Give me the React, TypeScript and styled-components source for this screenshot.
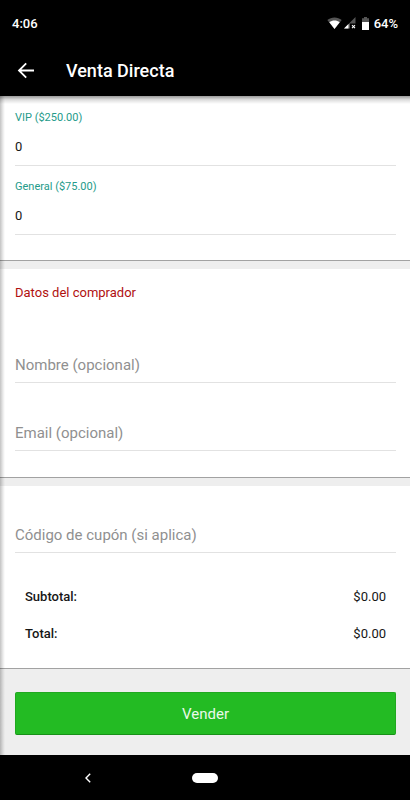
import React from "react";
import styled, { createGlobalStyle } from "styled-components";

const GlobalStyle = createGlobalStyle`
  *, *::before, *::after { box-sizing: border-box; }
  body {
    margin: 0;
    background: #eeeeee;
    color: #161616;
    font-family: Roboto, "Liberation Sans", sans-serif;
  }
`;

const Screen = styled.div`
  display: flex;
  flex-direction: column;
  min-height: 100vh;
`;

const StatusBar = styled.div`
  display: flex;
  align-items: center;
  justify-content: space-between;
  height: 46px;
  padding: 0 12px;
  background: #000;
  color: #fff;
  font-size: 13px;
  font-weight: 500;
`;

const StatusIcons = styled.div`
  display: flex;
  align-items: center;

  svg { display: block; }
`;

const WifiIcon = styled.svg`
  margin-right: 2px;
`;

const SignalIcon = styled.svg`
  margin-right: 6px;
`;

const BatteryIcon = styled.svg`
  margin-right: 5px;
`;

const AppBar = styled.header`
  display: flex;
  align-items: center;
  gap: 30px;
  height: 50px;
  padding: 0 16px;
  background: #000;
  color: #fff;
`;

const IconButton = styled.button`
  display: flex;
  align-items: center;
  justify-content: center;
  width: 20px;
  height: 20px;
  padding: 0;
  border: 0;
  background: none;
  color: inherit;
  cursor: pointer;
`;

const Title = styled.h1`
  margin: 0;
  font-size: 18px;
  font-weight: 500;
  line-height: 24px;
`;

const Content = styled.main`
  position: relative;
  display: flex;
  flex: 1;
  flex-direction: column;
  background: #eeeeee;

  &::before,
  &::after {
    content: "";
    position: absolute;
    top: 0;
    left: 0;
    pointer-events: none;
  }

  &::before {
    right: 0;
    height: 8px;
    background: linear-gradient(rgba(0, 0, 0, 0.4), rgba(0, 0, 0, 0.14) 45%, transparent);
  }

  &::after {
    bottom: 0;
    width: 5px;
    background: linear-gradient(to right, rgba(0, 0, 0, 0.24), rgba(0, 0, 0, 0.08) 60%, transparent);
  }
`;

const Panel = styled.section<{ $top?: number; $bottom: number }>`
  padding: ${(p) => p.$top ?? 0}px 14px ${(p) => p.$bottom}px 15px;
  border-bottom: 1px solid #a2a2a2;
  background: #fff;

  & + & { margin-top: 8px; }
`;

const Fields = styled.div`
  display: flex;
  flex-direction: column;
  gap: 1px;
`;

const Field = styled.div<{ $labelled?: boolean }>`
  display: flex;
  flex-direction: column;
  padding-top: ${(p) => (p.$labelled ? 12 : 30)}px;
`;

const Label = styled.label`
  margin-bottom: 3px;
  color: #259b8a;
  font-size: 11px;
  line-height: 16px;
`;

const TextInput = styled.input<{ $large?: boolean }>`
  width: 100%;
  height: 37px;
  padding: ${(p) => (p.$large ? "2px 0 0" : "0 0 1px")};
  border: 0;
  border-bottom: 1px solid #e2e2e2;
  border-radius: 0;
  outline: 0;
  background: transparent;
  color: #161616;
  font-family: inherit;
  font-size: ${(p) => (p.$large ? 15 : 13)}px;

  &::placeholder { color: #909090; opacity: 1; }
`;

const SectionTitle = styled.h2`
  margin: 0 0 11px;
  color: #b01010;
  font-size: 13px;
  font-weight: 400;
  line-height: 24px;
`;

const Totals = styled.dl`
  display: flex;
  flex-direction: column;
  gap: 17px;
  margin: 34px 10px 0;
`;

const TotalRow = styled.div`
  display: flex;
  justify-content: space-between;
  font-size: 13px;
  line-height: 20px;

  dt { font-weight: 500; }
  dd { margin: 0; }
`;

const Actions = styled.div`
  padding: 23px 14px 20px 15px;
`;

const SellButton = styled.button`
  display: block;
  width: 100%;
  height: 43px;
  padding: 0;
  border: 1px solid #20a820;
  border-bottom-color: #189018;
  border-radius: 2px;
  background: #23bb23;
  color: #e9f9e9;
  font-family: inherit;
  font-size: 15px;
  cursor: pointer;
`;

const NavBar = styled.nav`
  display: grid;
  grid-template-columns: 1fr auto 1fr;
  align-items: center;
  height: 45px;
  background: #000;
  color: #fff;
`;

const NavBack = styled(IconButton)`
  justify-self: center;
  margin-left: -16px;
`;

const HomePill = styled.button`
  width: 26px;
  height: 10px;
  padding: 0;
  border: 0;
  border-radius: 5px;
  background: #fff;
  cursor: pointer;
`;

export default function App() {
  return (
    <Screen>
      <GlobalStyle />
      <StatusBar>
        <span>4:06</span>
        <StatusIcons>
          <WifiIcon width="15" height="12" viewBox="0 0 15 12" aria-hidden="true">
            <path d="M7.5 12 0.3 3C4.4-.5 10.6-.5 14.7 3Z" fill="#555" />
            <path d="M7.5 12 2.3 5.3C5.3 2.8 9.7 2.8 12.7 5.3Z" fill="#fff" />
          </WifiIcon>
          <SignalIcon width="12" height="12" viewBox="0 0 12 12" aria-hidden="true">
            <path d="M0 11.5 11.5 0V6.5H6V11.5Z" fill="#555" />
            <path d="M0 11.5 4.5 7V11.5Z" fill="#fff" />
            <path d="M8 8.2 11 11.2M11 8.2 8 11.2" stroke="#fff" strokeWidth="1.1" />
          </SignalIcon>
          <BatteryIcon width="7" height="13" viewBox="0 0 7 13" aria-hidden="true">
            <path d="M2 0H5V1.3H7V5H0V1.3H2Z" fill="#555" />
            <path d="M0 5H7V13H0Z" fill="#fff" />
          </BatteryIcon>
          <span>64%</span>
        </StatusIcons>
      </StatusBar>
      <AppBar>
        <IconButton type="button" aria-label="Atrás">
          <svg width="20" height="20" viewBox="0 0 20 20" fill="none" stroke="currentColor" strokeWidth="1.8">
            <path d="M18 9.5H3.5M10.2 2.3 3 9.5 10.2 16.7" />
          </svg>
        </IconButton>
        <Title>Venta Directa</Title>
      </AppBar>
      <Content>
        <Panel $top={2} $bottom={25}>
          <Fields>
            <Field $labelled>
              <Label htmlFor="vip">VIP ($250.00)</Label>
              <TextInput id="vip" inputMode="numeric" defaultValue="0" />
            </Field>
            <Field $labelled>
              <Label htmlFor="general">General ($75.00)</Label>
              <TextInput id="general" inputMode="numeric" defaultValue="0" />
            </Field>
          </Fields>
        </Panel>
        <Panel $top={12} $bottom={26}>
          <SectionTitle>Datos del comprador</SectionTitle>
          <Fields>
            <Field>
              <TextInput $large aria-label="Nombre" placeholder="Nombre (opcional)" />
            </Field>
            <Field>
              <TextInput $large type="email" aria-label="Email" placeholder="Email (opcional)" />
            </Field>
          </Fields>
        </Panel>
        <Panel $bottom={24}>
          <Field>
            <TextInput $large aria-label="Código de cupón" placeholder="Código de cupón (si aplica)" />
          </Field>
          <Totals>
            <TotalRow>
              <dt>Subtotal:</dt>
              <dd>$0.00</dd>
            </TotalRow>
            <TotalRow>
              <dt>Total:</dt>
              <dd>$0.00</dd>
            </TotalRow>
          </Totals>
        </Panel>
        <Actions>
          <SellButton type="button">Vender</SellButton>
        </Actions>
      </Content>
      <NavBar aria-label="Sistema">
        <NavBack type="button" aria-label="Volver">
          <svg width="8" height="10" viewBox="0 0 8 10" fill="none" stroke="currentColor" strokeWidth="1.4">
            <path d="M6.2 0.8 2 5 6.2 9.2" />
          </svg>
        </NavBack>
        <HomePill type="button" aria-label="Inicio" />
      </NavBar>
    </Screen>
  );
}
